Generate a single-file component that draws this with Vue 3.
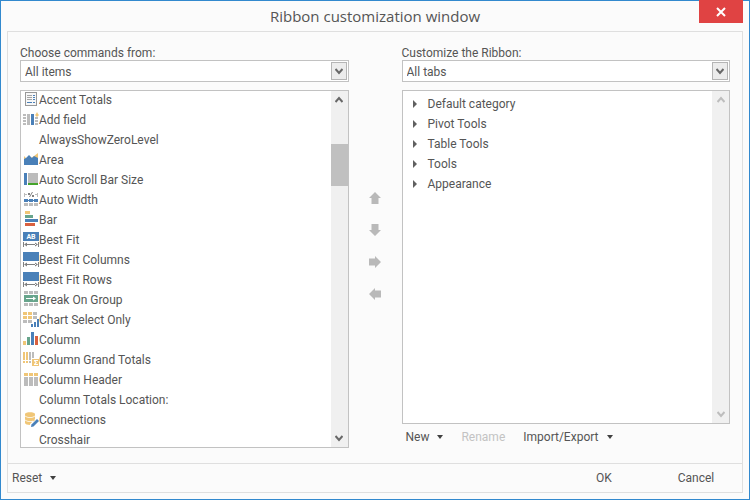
<template>
  <div class="window">
    <header class="titlebar">
      <h1 class="title">Ribbon customization window</h1>
      <button class="close" type="button" aria-label="Close">
        <svg width="10" height="10" viewBox="0 0 10 10"><path d="M1 1L9 9M9 1L1 9" /></svg>
      </button>
    </header>

    <main class="frame">
      <div class="content">
        <section class="column">
          <label class="label" for="source">Choose commands from:</label>
          <div class="combo">
            <select id="source" v-model="source">
              <option>All items</option>
            </select>
            <span class="combo-arrow">
              <svg width="8" height="7" viewBox="0 0 8 7"><path d="M0.5 1L4 5L7.5 1" /></svg>
            </span>
          </div>
          <div class="box">
            <ul class="commands">
              <li
                v-for="c in commands"
                :key="c.name"
                class="command"
                :class="{ selected: c.name === selected }"
                @click="selected = c.name"
              >
                <svg class="command-icon" viewBox="0 0 16 16">
                  <path v-for="(s, i) in icons[c.icon]" :key="i" :fill="s[0]" :d="s[1]" />
                  <text v-if="c.icon === 'fitText'" x="8" y="8" text-anchor="middle" class="icon-text">AB</text>
                </svg>
                <span>{{ c.name }}</span>
              </li>
            </ul>
            <div class="scrollbar">
              <svg class="scroll-arrow" viewBox="0 0 8 7"><path d="M0.5 6L4 2L7.5 6" /></svg>
              <div class="track">
                <div class="thumb"></div>
              </div>
              <svg class="scroll-arrow" viewBox="0 0 8 7"><path d="M0.5 1L4 5L7.5 1" /></svg>
            </div>
          </div>
        </section>

        <nav class="movers">
          <button v-for="m in movers" :key="m.label" type="button" class="mover" :aria-label="m.label">
            <svg width="12" height="12" viewBox="0 0 12 12"><path :d="m.d" /></svg>
          </button>
        </nav>

        <section class="column">
          <label class="label" for="target">Customize the Ribbon:</label>
          <div class="combo">
            <select id="target" v-model="target">
              <option>All tabs</option>
            </select>
            <span class="combo-arrow">
              <svg width="8" height="7" viewBox="0 0 8 7"><path d="M0.5 1L4 5L7.5 1" /></svg>
            </span>
          </div>
          <div class="box">
            <ul class="tree">
              <li v-for="t in tabs" :key="t" class="node">
                <svg width="5" height="8" viewBox="0 0 5 8"><path d="M0 0L4 4L0 8Z" /></svg>
                <span>{{ t }}</span>
              </li>
            </ul>
            <div class="scrollbar disabled">
              <svg class="scroll-arrow" viewBox="0 0 8 7"><path d="M0.5 6L4 2L7.5 6" /></svg>
              <div class="track"></div>
              <svg class="scroll-arrow" viewBox="0 0 8 7"><path d="M0.5 1L4 5L7.5 1" /></svg>
            </div>
          </div>
          <div class="actions">
            <button type="button" class="flat">New <i class="caret"></i></button>
            <button type="button" class="flat" disabled>Rename</button>
            <button type="button" class="flat">Import/Export <i class="caret"></i></button>
          </div>
        </section>
      </div>

      <footer class="footer">
        <button type="button" class="flat reset">Reset <i class="caret"></i></button>
        <button type="button" class="flat wide">OK</button>
        <button type="button" class="flat wide">Cancel</button>
      </footer>
    </main>
  </div>
</template>

<script setup>
import { ref } from 'vue'

const source = ref('All items')
const target = ref('All tabs')
const selected = ref('')

const commands = [
  { name: 'Accent Totals', icon: 'accent' },
  { name: 'Add field', icon: 'addField' },
  { name: 'AlwaysShowZeroLevel' },
  { name: 'Area', icon: 'area' },
  { name: 'Auto Scroll Bar Size', icon: 'scrollSize' },
  { name: 'Auto Width', icon: 'autoWidth' },
  { name: 'Bar', icon: 'bar' },
  { name: 'Best Fit', icon: 'fitText' },
  { name: 'Best Fit Columns', icon: 'fit' },
  { name: 'Best Fit Rows', icon: 'fit' },
  { name: 'Break On Group', icon: 'breakGroup' },
  { name: 'Chart Select Only', icon: 'chartSelect' },
  { name: 'Column', icon: 'column' },
  { name: 'Column Grand Totals', icon: 'grandTotals' },
  { name: 'Column Header', icon: 'header' },
  { name: 'Column Totals Location:' },
  { name: 'Connections', icon: 'connections' },
  { name: 'Crosshair' }
]

const tabs = ['Default category', 'Pivot Tools', 'Table Tools', 'Tools', 'Appearance']

const movers = [
  { label: 'Move up', d: 'M6 0L12 6H9.5V12H2.5V6H0Z' },
  { label: 'Move down', d: 'M2.5 0H9.5V6H12L6 12L0 6H2.5Z' },
  { label: 'Add', d: 'M0 2.5H6V0L12 6L6 12V9.5H0Z' },
  { label: 'Remove', d: 'M12 2.5H6V0L0 6L6 12V9.5H12Z' }
]

const blue = '#4a80b8'
const gray = '#bcbcbc'
const dark = '#808080'
const gold = '#f0c677'
const green = '#68a58c'
const red = '#d9603f'

const fit = [
  [blue, 'M0 1H16V10H0Z'],
  [dark, 'M0 11H1V16H0ZM15 11H16V16H15ZM3 13H13V14H3ZM1 13.5L4 11.5V15.5ZM15 13.5L12 11.5V15.5Z']
]

// each icon is a list of [fill, path] layers on a 16x16 grid
const icons = {
  accent: [
    ['#989898', 'M2 1H14V15H2Z'],
    ['#f7f7f7', 'M3 2H13V14H3Z'],
    ['#a5a5a5', 'M4 4H9V5H4ZM4 6H9V7H4ZM4 8H9V9H4Z'],
    [blue, 'M10 4H12V5H10ZM10 6H12V7H10ZM10 8H12V9H10ZM4 11H9V12H4ZM10 11H12V12H10Z']
  ],
  addField: [
    [gray, 'M0 3H3V5H0ZM0 6H3V8H0ZM0 9H3V11H0ZM0 12H3V14H0ZM4 3H7V14H4ZM12 6H15V8H12ZM12 9H15V11H12ZM12 12H15V14H12Z'],
    [blue, 'M8 3H11V14H8Z'],
    [gold, 'M14 1L15 3L16 4L15 5L14 6L13 5L12 4L13 3Z']
  ],
  area: [
    [gold, 'M1 5L4 8L8 7L11 5L15 2V14H1Z'],
    [blue, 'M1 8L3 7L6 4L9 7L11 5L15 7V14H1Z']
  ],
  scrollSize: [
    [blue, 'M1 2H4V14H1Z'],
    [gray, 'M5 2H15V12H5Z'],
    ['#45a42b', 'M5 12H15V14H5Z']
  ],
  autoWidth: [
    [gray, 'M1 2H2V6H1ZM14 2H15V6H14ZM2 3H4V4H2ZM12 3H14V4H12ZM1 12H5V15H1ZM6 12H10V15H6ZM11 12H15V15H11Z'],
    [dark, 'M5 2H7V4H5ZM9 1H10L7 6H6ZM9 4H11V6H9Z'],
    [blue, 'M1 8H5V11H1ZM6 8H10V11H6ZM11 8H15V11H11ZM4 9H12V10H4Z']
  ],
  bar: [
    [gold, 'M2 0H7V3H2Z'],
    [green, 'M2 4H10V7H2Z'],
    [blue, 'M2 8H15V11H2Z'],
    [red, 'M2 12H12V15H2Z']
  ],
  fitText: fit,
  fit,
  breakGroup: [
    [gray, 'M1 0H5V3H1ZM6 0H10V3H6ZM11 0H15V3H11ZM1 12H5V15H1ZM6 12H10V15H6ZM11 12H15V15H11Z'],
    [green, 'M1 4H15V11H1Z'],
    ['#fff', 'M3 7H10V5.5L13 7.5L10 9.5V8H3Z']
  ],
  chartSelect: [
    [gold, 'M0 1H4V4H0ZM5 1H9V4H5ZM0 5H4V8H0ZM5 5H9V8H5Z'],
    [gray, 'M10 1H14V4H10ZM10 5H14V8H10ZM0 9H4V12H0ZM5 9H9V12H5Z'],
    [blue, 'M8 13H10V16H8ZM11 11H13V16H11ZM14 8H16V16H14Z']
  ],
  column: [
    [gold, 'M0 10H3V14H0Z'],
    [green, 'M4 6H7V14H4Z'],
    [blue, 'M8 1H11V14H8Z'],
    [red, 'M12 5H15V14H12Z']
  ],
  grandTotals: [
    [gold, 'M0 1H2V9H0ZM3 1H5V9H3ZM0 10H2V12H0ZM3 10H5V12H3ZM9 8H16V15H9Z'],
    [gray, 'M6 1H8V9H6ZM9 1H11V7H9ZM6 10H8V12H6Z'],
    ['#fff', 'M11 9H15V10H12.5L14 11.5L12.5 13H15V14H11V13L12.5 11.5L11 10Z']
  ],
  header: [
    [gold, 'M1 2H5V5H1ZM6 2H10V5H6ZM11 2H15V5H11Z'],
    [gray, 'M1 6H5V15H1ZM6 6H10V15H6ZM11 6H15V15H11Z']
  ],
  connections: [
    [gold, 'M2 3C2 0.5 12 0.5 12 3V12C12 14.5 2 14.5 2 12Z'],
    ['#fff', 'M2 4.5C4 6.5 10 6.5 12 4.5V5.3C10 7.3 4 7.3 2 5.3ZM2 8.5C4 10.5 10 10.5 12 8.5V9.3C10 11.3 4 11.3 2 9.3ZM13 7L7 13V16L16 9Z'],
    [blue, 'M14 8L16 10L10.5 15.5L8 16L8.5 13.5Z']
  ]
}
</script>

<style>
body { margin: 0; }
</style>

<style scoped>
.window {
  box-sizing: border-box;
  height: 100vh; min-height: 300px;
  display: flex; flex-direction: column;
  padding: 0 6px 6px;
  border: 1px solid #3289ce;
  background: #fbfbfb; color: #555;
  font: 12px/20px Roboto, "Noto Sans", sans-serif;
}
button, select { font: inherit; color: inherit; }
button { border: none; background: none; padding: 0; }
ul { list-style: none; margin: 0; padding: 0; }

.titlebar {
  display: grid; grid-template-columns: 1fr auto;
  height: 30px;
}
.title {
  grid-area: 1 / 1 / 2 / 3;
  margin: 0; text-align: center;
  font: 400 15px/30px "Open Sans", "Noto Sans", sans-serif;
}
.close {
  grid-area: 1 / 2 / 2 / 3;
  width: 44px; height: 23px; margin-top: -1px;
  display: flex; align-items: center; justify-content: center;
  background: #e04343;
}
.close path { stroke: #fff; stroke-width: 2; }

.frame {
  flex: 1; min-height: 0;
  display: flex; flex-direction: column;
  border: 1px solid #dfdfdf;
}
.content {
  flex: 1; min-height: 0;
  display: grid; grid-template-columns: 1fr 53px 1fr;
  padding: 12px 12px 15px;
}
.column { display: flex; flex-direction: column; min-width: 0; min-height: 0; }
.label { height: 16px; line-height: 18px; }

.combo { position: relative; display: flex; margin-bottom: 8px; }
.combo select {
  flex: 1; height: 22px; padding: 1px 20px 0 4px;
  appearance: none; outline: none;
  border: 1px solid #c2c2c2; border-radius: 0; background: #fff;
}
.combo-arrow {
  position: absolute; top: 2px; right: 2px; bottom: 2px; width: 14px;
  display: flex; align-items: center; justify-content: center;
  border: 1px solid #b5b5b5; background: #ececec;
  pointer-events: none;
}
.combo-arrow path, .scroll-arrow path { fill: none; stroke: #686868; stroke-width: 2; }

.box {
  flex: 1; min-height: 0;
  display: flex;
  border: 1px solid #c2c2c2; background: #fff;
}
.commands { flex: 1; overflow: hidden; padding-left: 2px; }
.command { display: flex; height: 20px; line-height: 18px; white-space: nowrap; }
.command.selected { background: #d5e6f5; }
.command-icon { width: 16px; height: 16px; flex: none; }
.icon-text { fill: #fff; font-size: 7px; font-weight: 700; }

.scrollbar {
  width: 17px;
  display: flex; flex-direction: column; align-items: center;
  padding: 5px 0; box-sizing: border-box;
  background: #f0f0f0;
}
.scroll-arrow { width: 8px; height: 7px; flex: none; }
.scrollbar.disabled path { stroke: #bdbdbd; }
.track {
  flex: 1; align-self: stretch;
  display: grid; grid-template-rows: 41fr 42fr 249fr;
}
.thumb { grid-row: 2; background: #c0c0c0; }

.movers { display: flex; flex-direction: column; align-items: center; gap: 20px; padding-top: 148px; }
.mover { display: flex; }
.mover path { fill: #b9b9b9; }

.tree { flex: 1; overflow: hidden; padding: 3px 0 0 10px; }
.node { display: flex; align-items: center; gap: 10px; }
.node path { fill: #606060; }

.actions { display: flex; gap: 18px; padding: 3px 4px 1px; }
.flat { display: flex; align-items: center; gap: 8px; line-height: 20px; }
.flat:disabled { color: #c3c3c3; }
.caret {
  border: 3px solid transparent; border-top: 4px solid #404040; border-bottom: none;
}

.footer {
  display: flex; align-items: center;
  height: 28px; padding: 0 0 0 4px;
  border-top: 1px solid #dfdfdf;
}
.reset { margin-right: auto; }
.wide { width: 92px; justify-content: center; }
</style>
